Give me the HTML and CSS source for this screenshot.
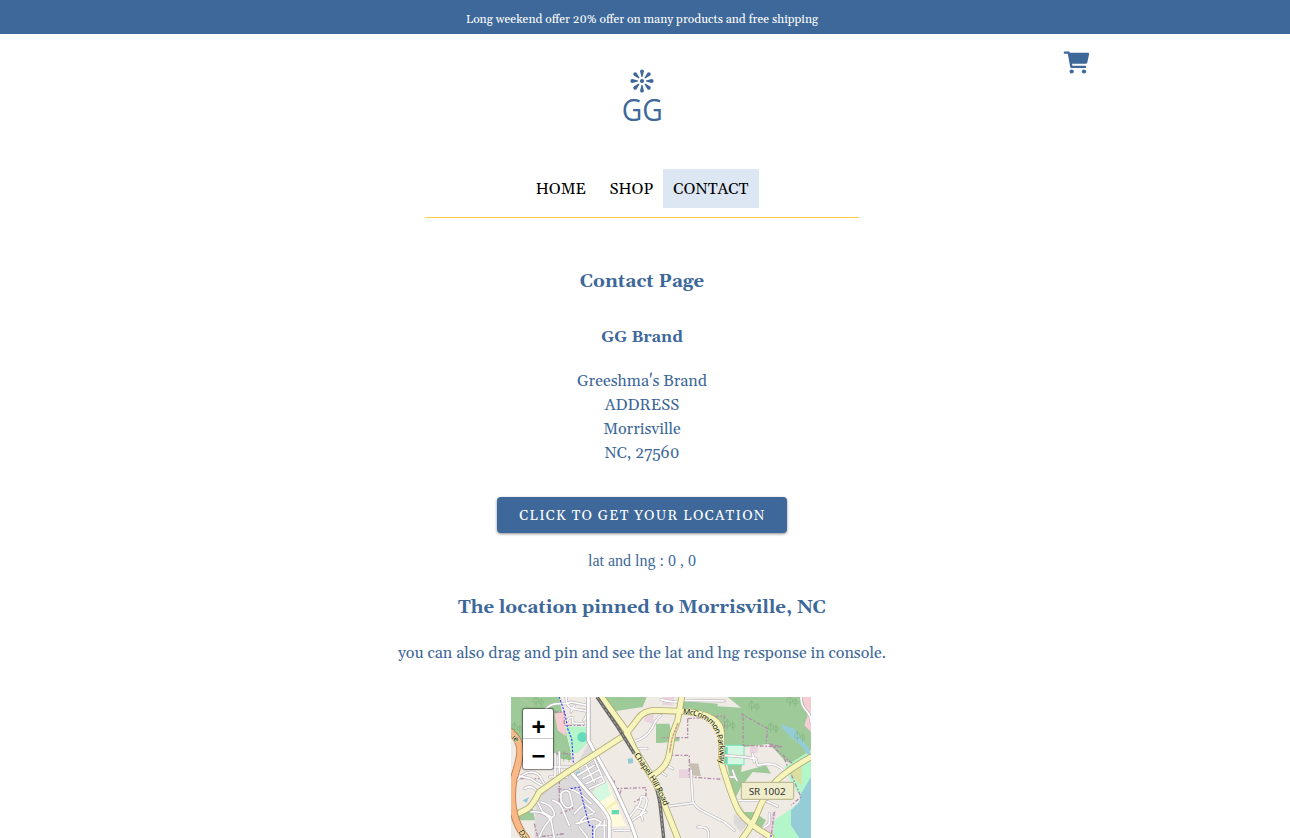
FILE: index.html
```html
<!DOCTYPE html>
<html lang="en">
<head>
<meta charset="utf-8">
<title>GG Brand - Contact</title>
<link rel="stylesheet" href="styles.css">
</head>
<body>
<div class="banner">Long weekend offer 20% offer on many products and free shipping</div>
<header class="header">
  <svg class="logo" viewBox="0 0 44 70" width="44" height="70">
    <g transform="translate(22 17)" fill="#3d6899">
      <circle r="2.1"/>
      <path id="ray" d="M-.5-4L-1.9-9.7A1.9 1.9 0 0 1 1.9-9.7L.5-4Z"/>
      <use href="#ray" transform="rotate(45)"/><use href="#ray" transform="rotate(90)"/><use href="#ray" transform="rotate(135)"/><use href="#ray" transform="rotate(180)"/><use href="#ray" transform="rotate(225)"/><use href="#ray" transform="rotate(270)"/><use href="#ray" transform="rotate(315)"/>
    </g>
    <text class="logo-text" x="1.8" y="56.7" textLength="41" lengthAdjust="spacingAndGlyphs">GG</text>
  </svg>
  <svg class="cart" viewBox="0 0 28 26" width="28" height="26" fill="#3d6899">
    <path d="M1.6 1.6H5.8Q6.6 1.6 6.9 2.8H25Q26.4 2.8 26.1 4.2L24.3 12.4Q24 13.7 22.6 13.7H9L9.4 15.8H22.2Q23.2 15.8 23.2 16.9T22.2 18H8.3Q7.4 18 7.2 17L4.8 3.7H1.6Q.7 3.7.7 2.7T1.6 1.6Z"/>
    <circle cx="8.7" cy="21.5" r="2.1"/><circle cx="21" cy="21.5" r="2.1"/>
  </svg>
  <nav class="nav"><a class="link">HOME</a><a class="link">SHOP</a><a class="link active">CONTACT</a></nav>
</header>
<main class="main">
  <h3 class="title">Contact Page</h3>
  <h4 class="brand">GG Brand</h4>
  <address class="address">Greeshma's Brand<br>ADDRESS<br>Morrisville<br>NC, 27560</address>
  <button class="button">CLICK TO GET YOUR LOCATION</button>
  <p class="coords">lat and lng : 0 , 0</p>
  <h3 class="pinned">The location pinned to Morrisville, NC</h3>
  <p class="hint">you can also drag and pin and see the lat and lng response in console.</p>
  <div class="map">
    <svg class="tiles" viewBox="0 0 900 423" width="300" height="141" fill="none" stroke-linecap="round" stroke-linejoin="round">
      <rect width="900" height="423" fill="#f0eae4"/>
      <!-- residential ground -->
      <path d="M130 0H240L232 140L195 205L150 250L75 300L70 423H290L250 270L275 240L240 150V0Z" fill="#dcd9db"/>
      <path d="M240 160L290 230L230 275L280 360L300 423H200L170 230Z" fill="#dcd9db"/>
      <!-- woodland and parks -->
      <path d="M0 0H145L160 90L180 165L30 170L0 90Z" fill="#9dca98"/>
      <path d="M128 60L160 80L178 168L182 190L150 185L128 165Z" fill="#9dca98"/>
      <path d="M130 50L160 45L162 75L165 118L140 100Z" fill="#f6cdd2"/>
      <path d="M163 88L230 90L232 135L200 168H182Z" fill="#b4f5ca"/>
      <path d="M0 340L65 335L72 370H20Z" fill="#9dca98"/>
      <path d="M275 0H407L395 30L310 43Z" fill="#9dca98"/>
      <path d="M435 80H475L485 122H505V132L450 138H435Z" fill="#9dca98"/>
      <path d="M515 12L620 20V28L690 32L650 0H900V160L840 200L820 190L775 140L700 150L690 225L765 205L780 230L725 225L690 270L670 310L650 210L630 90L575 50L515 40Z" fill="#9dca98"/>
      <path d="M680 310L700 345H730L765 370L750 395L710 370Z" fill="#9dca98"/>
      <path d="M873 0H900V105L880 85L890 55Z" fill="#f6cdd2"/>
      <path d="M245 285L287 250L322 335L345 387L298 390L280 340Z" fill="#fffbdc"/>
      <path d="M245 285L287 250L300 295L265 315Z" fill="#d5f8e0"/>
      <path d="M287 335L315 315" stroke="#f7eeb0" stroke-width="7"/>
      <path d="M640 145H699V203H640Z" fill="#d5f8e0" stroke="#78e6c6" stroke-width="3"/>
      <path d="M640 150H650V200H640Z" fill="#65dbc0"/>
      <path d="M402 50L430 48L425 80L400 72Z" fill="#e9d3df"/>
      <path d="M455 0H490L485 25L455 23ZM504 217H539V243H504ZM717 150H740V168H717Z" fill="#e9d3df"/>
      <path d="M535 198L562 200L570 238L543 235Z" fill="#c7bfb1"/>
      <path d="M668 350L710 380L690 405L668 380Z" fill="#dcd9db"/>
      <path d="M775 355L795 340L785 423H750Z" fill="#e9d3df"/>
      <circle cx="214" cy="121" r="15" fill="#64dbbc"/>
      <path d="M302 339H324V352H302ZM320 398H335V405H320Z" fill="#65dbb4"/>
      <!-- water -->
      <path d="M785 423L790 370L840 335L875 310L845 265L820 210L900 160V423Z" fill="#b3f6ca"/>
      <path d="M825 215L872 195V265L850 245Z" fill="#d8dfa0"/>
      <path d="M900 240L870 290L865 315L840 340V385L865 423H900Z" fill="#94cdd8"/>
      <path d="M810 82L850 96L867 120L895 155L900 190L875 150L845 125L815 95Z" fill="#94cdd8"/>
      <path d="M350 185L365 184L367 198L352 200ZM195 225L207 222L209 238L198 240ZM35 310L55 300L46 318Z" fill="#94c9d7"/>
      <!-- boundaries -->
      <g stroke="#b48aaa" stroke-width="4" stroke-dasharray="12 5 5 5" stroke-linecap="butt">
        <path d="M130 45H160V85H240M145 195V330M105 170H180M140 275L175 280L185 335L145 350"/>
        <path d="M300 240L325 310L335 330M310 250V275L405 272V295L370 315M330 280L320 310"/>
        <path d="M530 65V122H450M465 175H535V240L632 247M530 65L640 57V145M696 60V145L815 150L775 140L845 200M690 50L770 95L765 140M820 185L870 300L840 325M790 345L780 420M0 245H95M70 380L80 420L160 410"/>
      </g>
      <!-- local streets: casing and fill -->
      <g stroke="#b9b4b9" stroke-width="8.5">
        <path id="locals" d="M100 40Q120 18 145 20T180 15L230 25M165 0Q165 30 185 35L225 42Q230 60 218 70M170 72Q170 60 185 62V78L218 80M190 25L180 45M132 170V245M110 210H180M115 240H170M145 165V230M10 260Q35 225 60 225Q85 228 90 245L108 275Q100 295 80 285Q60 260 40 275M15 235L60 245Q85 265 110 270M75 305L95 345L120 360M60 345Q100 340 120 370L130 423M90 315Q130 325 130 355Q100 380 85 420M125 310Q150 315 160 350L175 385M150 290Q160 275 175 285L185 325Q165 345 150 310ZM175 275Q205 285 218 300L240 320M190 350L220 320L250 345M205 380Q215 355 245 350M205 215L250 185L280 255L235 275M200 235L250 205M215 245L262 220M225 260L272 238M225 205L250 255M195 380L250 365L270 375L250 400V423M280 370V423M255 385H295M205 390L230 423M352 365L375 335Q390 320 390 300Q405 295 408 310Q405 335 390 350L395 370M355 378Q375 360 405 345M375 330L400 340M310 400H355"/>
        <path id="lanes" d="M450 8Q490 20 520 10L640 12M460 210Q470 205 485 215M450 225L465 235M540 220L545 310Q550 330 580 345T640 375L670 400M545 318L455 330M560 390Q590 388 592 405V423M640 175L700 180L735 185L740 205Q795 190 820 225M725 170L730 195M680 310H760L800 328M775 350V380L755 395M655 240H672M665 220L672 240L678 250M365 155H408M370 133Q405 125 425 90Q435 65 450 55M870 0Q870 25 885 40T900 75"/>
      </g>
      <g stroke="#fff" stroke-width="5"><use href="#locals"/><use href="#lanes"/></g>
      <path d="M232 0V130L265 190L310 270L360 380L375 423M175 220L235 290Q290 345 295 370V423" stroke="#b0acb0" stroke-width="13"/>
      <path d="M232 0V130L265 190L310 270L360 380L375 423M175 220L235 290Q290 345 295 370V423" stroke="#fff" stroke-width="9"/>
      <!-- main roads -->
      <g stroke="#aeab72" stroke-width="20">
        <path id="r1" d="M0 360L50 335Q65 325 85 285L170 225L345 112L385 60Q400 42 430 40L510 43"/>
        <path id="r2" d="M272 0L345 100L370 155L435 260L500 423M512 0L500 70L485 110L475 170Q470 210 425 235"/>
        <path id="r3" d="M505 43C600 45 632 75 632 110V200C650 260 665 310 685 345Q710 380 780 420M695 423Q725 385 740 345T785 265Q810 230 900 180"/>
      </g>
      <g stroke="#f7f5bb" stroke-width="15"><use href="#r1"/><use href="#r2"/><use href="#r3"/></g>
      <path d="M500 80L483 125L476 165" stroke="#cfa488" stroke-width="5" stroke-dasharray="5 6"/>
      <path d="M0 105C45 145 25 190 8 245C-5 325 10 380 45 423" stroke="#b8794b" stroke-width="23"/>
      <path d="M0 105C45 145 25 190 8 245C-5 325 10 380 45 423" stroke="#f9b888" stroke-width="18"/>
      <path d="M258 0L320 90L370 170M438 275L447 320L458 423" stroke="#666" stroke-width="10" stroke-linecap="butt"/>
      <path d="M258 0L320 90L370 170M438 275L447 320L458 423" stroke="#c8c8c8" stroke-width="2" stroke-dasharray="8 7"/>
      <path d="M145 0L162 50L170 95L182 125L187 195M180 275L205 270L235 385L245 388V423M780 415V423" stroke="#363ff0" stroke-width="3.5" stroke-dasharray="4 7"/>
      <path d="M28 0L75 38" stroke="#d4bfa4" stroke-width="2"/>
      <!-- tree glyphs -->
      <g stroke="#82b27c" stroke-width="2">
        <path id="tree" d="M722 12C709 23 713 32 722 32C731 32 735 23 722 12V40M738 20C729 28 729 35 738 35C747 35 747 28 738 20V42"/>
        <use href="#tree" x="-73" y="56"/><use href="#tree" x="57" y="66"/><use href="#tree" x="115" y="-14"/><use href="#tree" x="137" y="92"/><use href="#tree" x="-647" y="-14"/><use href="#tree" x="-712" y="66"/><use href="#tree" x="-564" y="152"/>
      </g>
      <!-- labels -->
      <path id="chapel" d="M369 174L420 250Q445 292 466 345"/>
      <path id="mccrimmon" d="M515 51Q595 57 614 108T620 230"/>
      <text class="road"><textPath href="#chapel" textLength="178">Chapel Hill Road</textPath></text>
      <text class="road"><textPath href="#mccrimmon" textLength="214">McCrimmon Parkway</textPath></text>
      <text class="road" transform="translate(1 123) rotate(45)">ie</text>
      <text class="road" transform="translate(22 404) rotate(60)">Da</text>
      <rect x="691" y="256" width="157" height="51" rx="5" fill="#efedcb" stroke="#b5b184" stroke-width="3"/>
      <text class="shield" x="713" y="293" textLength="111" lengthAdjust="spacingAndGlyphs">SR 1002</text>
    </svg>
    <div class="zoom"><a class="zoom-btn">+</a><a class="zoom-btn">−</a></div>
  </div>
</main>
</body>
</html>
```
FILE: styles.css
```css
body { margin: 0; width: 1290px; height: 838px; overflow: hidden; background: #fff; font: 16px/24px Georgia, Gelasio, "Liberation Serif", serif; color: #3d6899; }
.banner { box-sizing: border-box; height: 34px; padding: 8px 6px 0 0; background: #3d6899; color: #fff; font-size: 12px; text-align: center; }
.header { position: relative; width: 1284px; height: 184px; display: flex; flex-direction: column; align-items: center; }
.logo { margin-top: 30px; overflow: visible; }
.logo-text { font: 31px "Open Sans", "Noto Sans", sans-serif; fill: #3d6899; }
.cart { position: absolute; left: 1063px; top: 16px; }
.nav { box-sizing: border-box; width: 434px; height: 49px; margin-top: 35px; padding-left: 1px; display: flex; justify-content: center; align-items: flex-start; border-bottom: 1px solid #fccf45; }
.link { box-sizing: border-box; height: 39px; padding: 8px 10px 0; color: #000; }
.link + .link { margin-left: 3.5px; }
.link + .active { width: 96px; margin-left: 0; background: #dde7f3; }
.main { width: 1284px; display: flex; flex-direction: column; align-items: center; padding-top: 52px; }
.title, .pinned { margin: 0; font-size: 18.72px; font-weight: 700; line-height: 24px; }
.brand { margin: 31px 0 20px; font-size: 16px; }
.address { font-style: normal; text-align: center; }
.button { width: 290px; height: 36px; margin: 32px 0 16px; padding: 2px 0 0 1px; border: 0; border-radius: 4px; background: #3d6899; color: #fff; font: 14px Georgia, Gelasio, "Liberation Serif", serif; letter-spacing: 1.25px; box-shadow: 0 1px 3px rgba(0,0,0,.45); }
.coords { margin: 0; font-family: "Liberation Serif", serif; }
.pinned { margin: 23px 0 21px; }
.hint { margin: 0 0 32px; }
.map { position: relative; width: 300px; height: 141px; margin-left: 38px; }
.tiles { display: block; overflow: hidden; }
.road { font: 24px "Noto Sans", sans-serif; fill: #111; stroke: #f7f5bb; stroke-width: 3px; paint-order: stroke; }
.shield { font: 28px "Noto Sans", sans-serif; fill: #333; }
.zoom { position: absolute; left: 12px; top: 12px; width: 30px; border-radius: 2px; background: #fff; box-shadow: 0 0 0 1px rgba(0,0,0,.3), 0 0 2px 1px rgba(0,0,0,.25); }
.zoom-btn { display: block; height: 29px; padding-left: 1px; color: #000; font: bold 24px/35px "Liberation Sans", sans-serif; text-align: center; }
.zoom-btn + .zoom-btn { border-top: 1px solid #ccc; height: 30px; line-height: 34px; }
```
